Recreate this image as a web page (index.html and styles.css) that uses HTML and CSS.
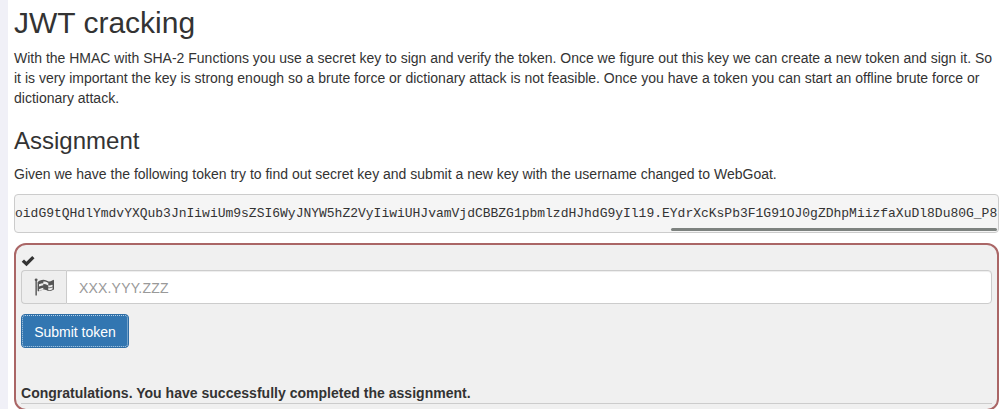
FILE: index.html
```html
<!DOCTYPE html>
<html lang="en">
<head>
<meta charset="utf-8">
<title>JWT cracking</title>
<link rel="stylesheet" href="styles.css">
</head>
<body>
<main class="lesson">
  <h1 class="title">JWT cracking</h1>
  <p class="intro">With the HMAC with SHA-2 Functions you use a secret key to sign and verify the token. Once we figure out this key we can create a new token and sign it. So<br>it is very important the key is strong enough so a brute force or dictionary attack is not feasible. Once you have a token you can start an offline brute force or<br>dictionary attack.</p>
  <h2 class="subtitle">Assignment</h2>
  <p class="task">Given we have the following token try to find out secret key and submit a new key with the username changed to WebGoat.</p>
  <pre class="token"><code>oidG9tQHdlYmdvYXQub3JnIiwiUm9sZSI6WyJNYW5hZ2VyIiwiUHJvamVjdCBBZG1pbmlzdHJhdG9yIl19.EYdrXcKsPb3F1G91OJ0gZDhpMiizfaXuDl8Du80G_P8</code><span class="thumb"></span></pre>
  <form class="attack">
    <div class="status"><svg class="check" viewBox="0 0 14 12" width="14" height="12"><path d="M.7 6.7 3 4.4 5.4 6.8 11.2 1 13.5 3.3 5.5 11.2Z" fill="#333"/></svg></div>
    <div class="group">
      <span class="addon"><svg viewBox="0 0 1792 1792" width="20" height="20"><path fill="#555" fill-rule="evenodd" d="M832 536v192q-181 16-384 117v-185q205-96 384-124zM832 954v197q-172 8-384 126v-189q215-111 384-134zM1664 491v184q-235 116-384 71v-224q-20-6-39-15-5-3-33-17t-34.500-17-31.500-15-34.500-15.500-32.500-13-36-12.500-35-8.500-39.500-7.500-39.500-4-44-2q-23 0-49 3v222h19q102 0 192.500 29t197.500 82q19 9 39 15v188q42 17 91 17 120 0 293-92zM1664 918v189q-169 91-306 91-45 0-78-8v-196q148 42 384-76zM320 256q0 35-17.500 64t-46.500 46v1266q0 14-9 23t-23 9h-64q-14 0-23-9t-9-23v-1266q-29-17-46.500-46t-17.500-64q0-53 37.500-90.500t90.500-37.500 90.500 37.500 37.500 90.500zM1792 320v763q0 39-35 57-10 5-17 9-218 116-369 116-88 0-158-35l-28-14q-64-33-99-48t-91-29-114-14q-102 0-235.500 44t-228.500 102q-15 9-33 9-16 0-32-8-32-19-32-56v-742q0-35 31-55 35-21 78.500-42.500t114-52 152.500-49.500 155-19q112 0 209 31t209 86q38 19 89 19 122 0 310-112 22-12 31-17 31-16 62 2 31 20 31 54z"/></svg></span>
      <input class="field" type="text" placeholder="XXX.YYY.ZZZ">
    </div>
    <button class="submit" type="button">Submit token</button>
    <div class="feedback">Congratulations. You have successfully completed the assignment.</div>
  </form>
</main>
</body>
</html>
```
FILE: styles.css
```css
* { box-sizing: border-box; }
html { overflow: hidden; background: #fff; }
body {
  margin: 0;
  height: 409px;
  overflow: hidden;
  color: #333;
  font: 14px/20px "Liberation Sans", Arial, sans-serif;
  border-left: 8px solid #f0f0f7;
}
.lesson { padding: 6px 0 0 6px; }
.title { margin: 0 0 9px; font-size: 30px; line-height: 33px; font-weight: 400; }
.intro { margin: 0; white-space: nowrap; }
.subtitle { margin: 20px 0 10px; font-size: 24px; line-height: 26px; font-weight: 400; }
.task { margin: 0 0 10px; white-space: nowrap; letter-spacing: .003px; }
.token {
  position: relative;
  margin: 0 0 10px;
  height: 39px;
  padding: 9px 0;
  border: 1px solid #ccc;
  border-radius: 4px;
  background: #f5f5f5;
  font: 13px/19px "Liberation Mono", monospace;
  letter-spacing: -.006px;
  overflow: hidden;
}
.token code { font: inherit; }
.thumb {
  position: absolute;
  right: 1px;
  bottom: 1px;
  width: 326px;
  height: 3px;
  border-radius: 2px;
  background: #7d827f;
}
.attack {
  height: 168px;
  padding: 5px;
  border: 2px solid #a66;
  border-radius: 12px;
  background: #f0f0f0;
}
.status { height: 20px; padding-top: 5px; }
.check { display: block; }
.group { display: flex; height: 34px; margin-bottom: 10px; }
.addon {
  display: flex;
  width: 45px;
  padding: 6px 0 0 12px;
  border: 1px solid #ccc;
  border-right: 0;
  border-radius: 4px 0 0 4px;
  background: #eee;
}
.field {
  flex: 1;
  min-width: 0;
  padding: 7px 12px 5px;
  border: 1px solid #ccc;
  border-radius: 0 4px 4px 0;
  background: #fff;
  box-shadow: inset 0 1px 1px rgba(0, 0, 0, .075);
  font: inherit;
  letter-spacing: .18px;
}
.field::placeholder { color: #999; }
.submit {
  display: block;
  width: 108px;
  height: 34px;
  padding: 2px 0 0;
  border: 1px solid #2e6da4;
  border-radius: 4px;
  background: #3276b1;
  color: #fff;
  font: inherit;
  white-space: nowrap;
  outline: 1px dotted #b5cfe5;
  outline-offset: -2px;
}
.feedback {
  height: 21px;
  margin-top: 35px;
  border-bottom: 1px solid #ccc;
  font-weight: 700;
  letter-spacing: .02px;
}
```
